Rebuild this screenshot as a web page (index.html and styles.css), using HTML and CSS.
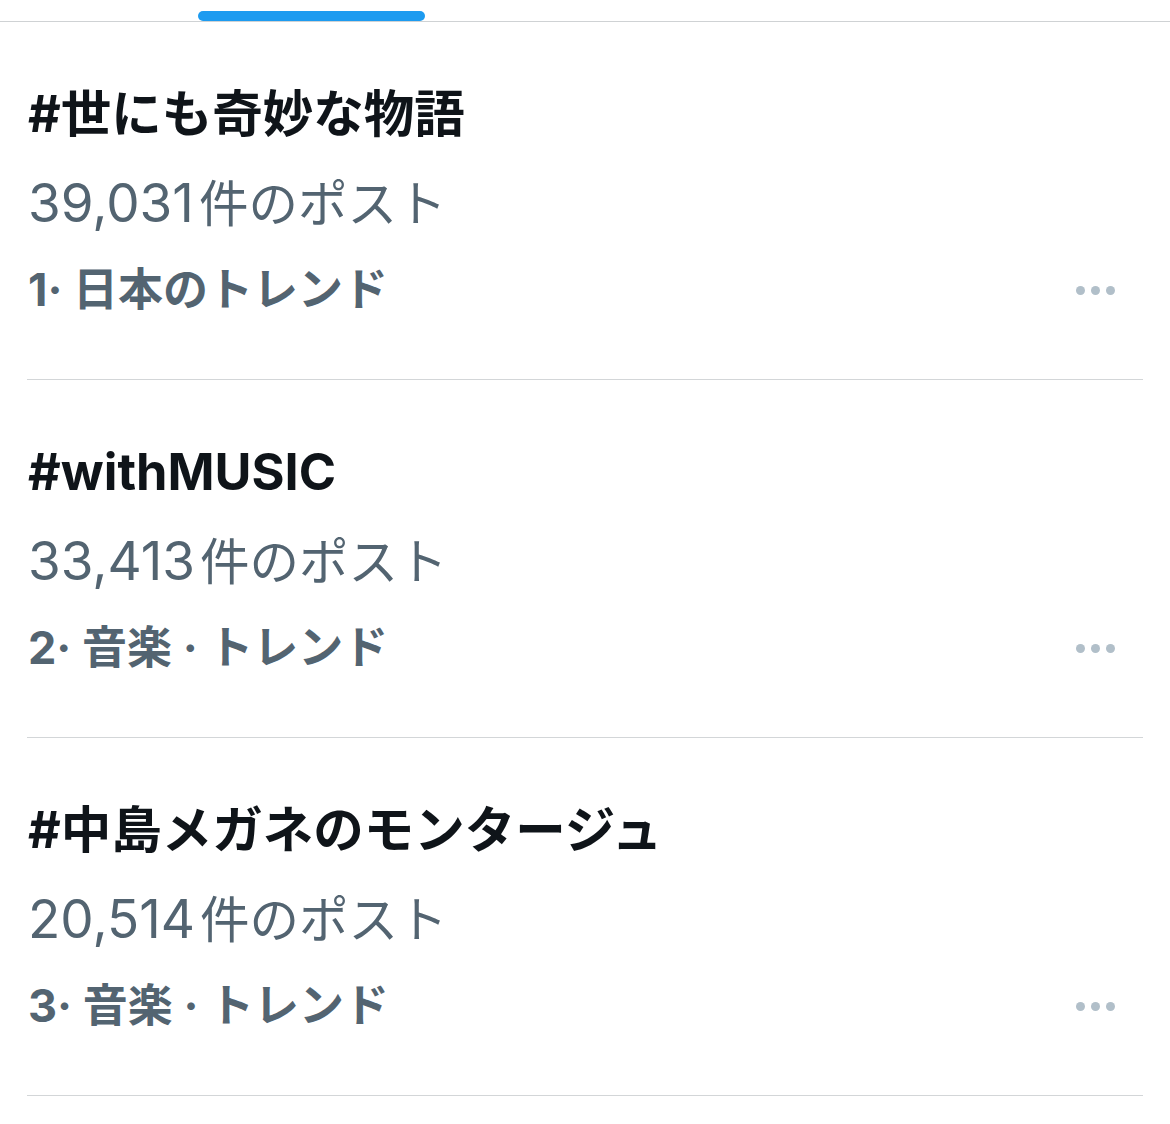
FILE: index.html
```html
<!DOCTYPE html>
<html lang="ja">
<head>
<meta charset="utf-8">
<link rel="stylesheet" href="styles.css">
</head>
<body>
<div class="tabs"><div class="indicator"></div></div>
<ul class="trends">
  <li class="trend">
    <div class="trend-text">
      <div class="title">#世にも奇妙な物語</div>
      <div class="count"><span class="num">39,031</span>件のポスト</div>
      <div class="category">1· 日本のトレンド</div>
    </div>
    <div class="more"><span></span><span></span><span></span></div>
  </li>
  <li class="trend">
    <div class="trend-text">
      <div class="title">#withMUSIC</div>
      <div class="count"><span class="num">33,413</span>件のポスト</div>
      <div class="category">2· 音楽 · トレンド</div>
    </div>
    <div class="more"><span></span><span></span><span></span></div>
  </li>
  <li class="trend">
    <div class="trend-text">
      <div class="title">#中島メガネのモンタージュ</div>
      <div class="count"><span class="num">20,514</span>件のポスト</div>
      <div class="category">3· 音楽 · トレンド</div>
    </div>
    <div class="more"><span></span><span></span><span></span></div>
  </li>
</ul>
</body>
</html>
```
FILE: styles.css
```css
html, body {
  margin: 0;
  padding: 0;
  background: #ffffff;
}
body {
  font-family: "Inter", "Noto Sans CJK JP", sans-serif;
  width: 1170px;
}
.tabs {
  height: 21px;
  border-bottom: 1px solid #cfd2d4;
  display: flex;
  align-items: flex-end;
}
.indicator {
  margin-left: 198px;
  width: 227px;
  height: 10px;
  border-radius: 5px;
  background: #1d9bf0;
}
.trends {
  list-style: none;
  margin: 0;
  padding: 0 27px;
}
.trend {
  display: flex;
  align-items: flex-end;
  justify-content: space-between;
  border-bottom: 1px solid #d3d6d8;
  padding: 63px 0 59px 1px;
  height: 235px;
}
.title {
  font-size: 50.5px;
  font-weight: 700;
  color: #0f1419;
  line-height: 60px;
}
.count {
  font-size: 49.5px;
  font-weight: 400;
  color: #536471;
  line-height: 60px;
  margin-top: 29px;
}
.num {
  font-size: 53px;
  margin-right: 5px;
}
.category {
  font-size: 45px;
  font-weight: 700;
  color: #536471;
  line-height: 60px;
  margin-top: 26px;
}
.more {
  display: flex;
  gap: 6px;
  margin-right: 28px;
  height: 60px;
  align-items: center;
}
.more span {
  width: 9px;
  height: 9px;
  border-radius: 50%;
  background: #b1bfc9;
}
```
